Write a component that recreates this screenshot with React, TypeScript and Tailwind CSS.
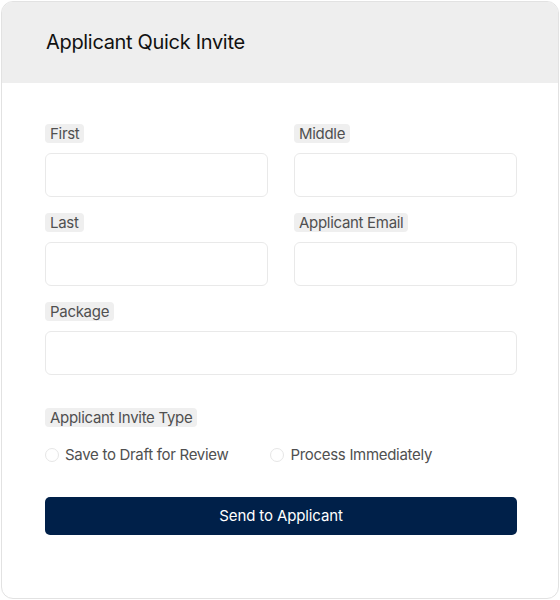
import React from "react";

function Label({ children }: { children: React.ReactNode }) {
  return (
    <div className="flex">
      <span className="rounded-[4px] bg-[#efefef] px-[5px] text-[15px] leading-[19px] tracking-[-0.3px] text-[#505050]">
        {children}
      </span>
    </div>
  );
}

function Field({ label }: { label: string }) {
  return (
    <div className="flex flex-col gap-[10px]">
      <Label>{label}</Label>
      <div className="h-[44px] rounded-[6px] border border-[#e9e9e9] bg-white" />
    </div>
  );
}

function Radio({ label }: { label: string }) {
  return (
    <div className="flex items-center gap-[6px]">
      <span className="h-[14px] w-[14px] rounded-full border border-[#e6e6e6] bg-white" />
      <span className="text-[15px] leading-[19px] tracking-[-0.3px] text-[#505050]">{label}</span>
    </div>
  );
}

export default function App() {
  return (
    <div
      className="h-[600px] w-[560px] bg-white p-px"
      style={{ fontFamily: "Inter, 'Noto Sans', sans-serif" }}
    >
      <div className="flex h-[598px] w-[558px] flex-col overflow-hidden rounded-[12px] border border-[#e2e2e2] bg-white">
        <div className="flex h-[81px] items-center bg-[#eeeeee] px-[44px]">
          <h1 className="-mt-px text-[20px] font-normal leading-[24px] tracking-[-0.32px] text-[#111111]">
            Applicant Quick Invite
          </h1>
        </div>
        <div className="ml-[43px] flex w-[472px] flex-col pt-[41px]">
          <div className="grid grid-cols-2 gap-x-[26px] gap-y-[16px]">
            <Field label="First" />
            <Field label="Middle" />
            <Field label="Last" />
            <Field label="Applicant Email" />
            <div className="col-span-2">
              <Field label="Package" />
            </div>
          </div>
          <div className="mt-[33px]">
            <Label>Applicant Invite Type</Label>
          </div>
          <div className="mt-[18px] flex gap-[42px]">
            <Radio label="Save to Draft for Review" />
            <Radio label="Process Immediately" />
          </div>
          <button className="mt-[33px] h-[38px] w-full rounded-[5px] bg-[#002049] text-[15px] tracking-[-0.12px] text-white">
            Send to Applicant
          </button>
        </div>
      </div>
    </div>
  );
}
